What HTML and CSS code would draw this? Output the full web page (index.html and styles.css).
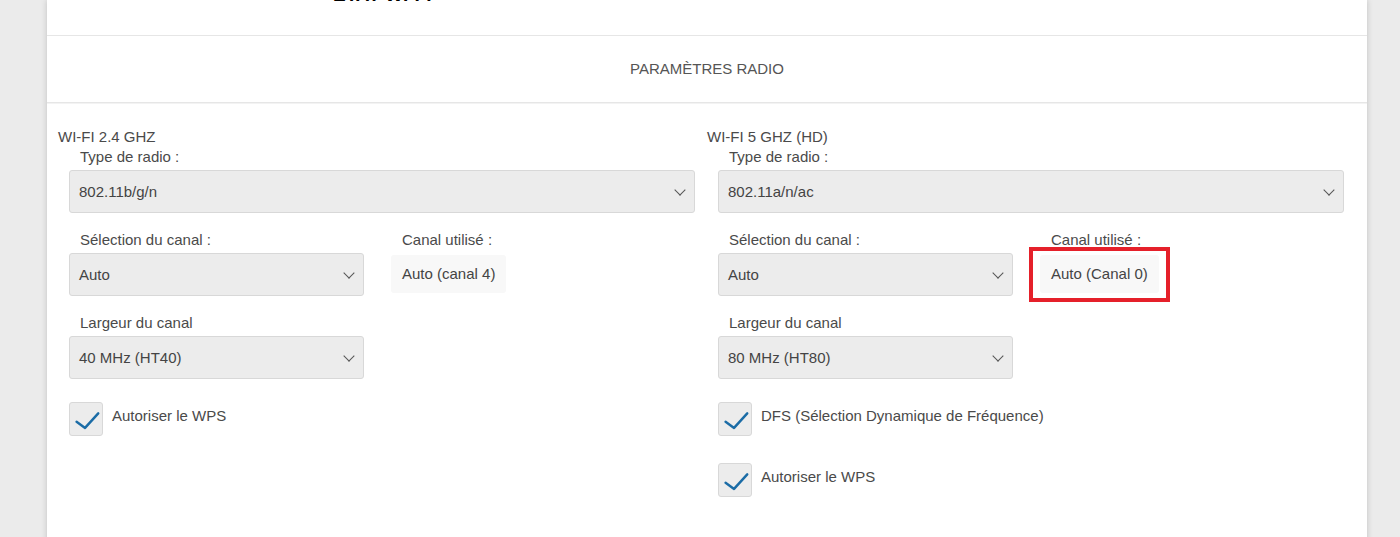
FILE: index.html
```html
<!DOCTYPE html>
<html lang="fr">
<head>
  <meta charset="UTF-8">
  <title>Paramètres radio</title>
  <link rel="stylesheet" href="styles.css">
</head>
<body>
  <div class="page">
    <!-- fin du bloc précédent -->
    <div class="prev-block">
      <h2 class="prev-title">ÉTAT WI-FI</h2>
    </div>

    <section class="panel">
      <div class="panel-head">PARAMÈTRES RADIO</div>

      <div class="panel-body">
        <!-- Wi-Fi 2.4 GHz -->
        <div class="band">
          <h3>WI-FI 2.4 GHZ</h3>
          <div class="band-fields">
            <div class="field">
              <label>Type de radio :</label>
              <div class="select">802.11b/g/n</div>
            </div>

            <div class="field-row">
              <div class="field small">
                <label>Sélection du canal :</label>
                <div class="select">Auto</div>
              </div>
              <div class="field">
                <label>Canal utilisé :</label>
                <div class="readout">Auto (canal 4)</div>
              </div>
            </div>

            <div class="field small">
              <label>Largeur du canal</label>
              <div class="select">40 MHz (HT40)</div>
            </div>

            <div class="check">
              <span class="box"><svg viewBox="0 0 34 34"><path d="M7 20 L16 26.5 L30 11"/></svg></span>
              <span>Autoriser le WPS</span>
            </div>
          </div>
        </div>

        <!-- Wi-Fi 5 GHz -->
        <div class="band">
          <h3>WI-FI 5 GHZ (HD)</h3>
          <div class="band-fields">
            <div class="field">
              <label>Type de radio :</label>
              <div class="select">802.11a/n/ac</div>
            </div>

            <div class="field-row">
              <div class="field small">
                <label>Sélection du canal :</label>
                <div class="select">Auto</div>
              </div>
              <div class="field">
                <label>Canal utilisé :</label>
                <div class="readout marked">Auto (Canal 0)</div>
              </div>
            </div>

            <div class="field small">
              <label>Largeur du canal</label>
              <div class="select">80 MHz (HT80)</div>
            </div>

            <div class="check">
              <span class="box"><svg viewBox="0 0 34 34"><path d="M7 20 L16 26.5 L30 11"/></svg></span>
              <span>DFS (Sélection Dynamique de Fréquence)</span>
            </div>

            <div class="check">
              <span class="box"><svg viewBox="0 0 34 34"><path d="M7 20 L16 26.5 L30 11"/></svg></span>
              <span>Autoriser le WPS</span>
            </div>
          </div>
        </div>
      </div>
    </section>
  </div>
</body>
</html>
```

FILE: styles.css
```css
* {
  margin: 0;
  padding: 0;
  box-sizing: border-box;
}
body {
  font-family: 'Liberation Sans', Arial, sans-serif;
  font-size: 15px;
  background-color: #ebebeb;
  color: #4a4a4a;
  overflow: hidden;
}

/* carte principale */
.page {
  width: 1320px;
  margin-left: 47px;
  min-height: 600px;
  background: #fff;
  box-shadow: 0 0 6px rgba(0,0,0,0.18);
}

.prev-block {
  display: flow-root;
  height: 36px;
  border-bottom: 1px solid #e6e6e6;
}
.prev-title {
  margin-top: -16px;
  padding-left: 286px;
  font-size: 19px;
  line-height: 22px;
  font-weight: 700;
  color: #000;
}

/* en-tête du panneau */
.panel-head {
  height: 67px;
  padding-bottom: 2px;
  display: flex;
  align-items: center;
  justify-content: center;
  text-transform: uppercase;
  color: #555;
  border-bottom: 1px solid #e6e6e6;
  box-shadow: 0 1px 0 #f3f3f3;
}

.panel-body {
  display: grid;
  grid-template-columns: 649px 649px;
  padding: 0 11px 40px;
}

.band h3 {
  font-size: 15px;
  font-weight: 400;
  line-height: 20px;
  margin-top: 24px;
  color: #4a4a4a;
}
.band-fields {
  padding: 0 12px 0 11px;
}

/* champs */
.field label {
  display: block;
  padding-left: 11px;
  line-height: 20px;
  margin-bottom: 3px;
  color: #4a4a4a;
}
.field + .field-row,
.field-row + .field {
  margin-top: 17px;
}
.field.small {
  width: 295px;
}
.field-row {
  display: flex;
  gap: 27px;
}

.select {
  position: relative;
  height: 43px;
  line-height: 41px;
  padding-left: 9px;
  background: #ececec;
  border: 1px solid #d8d8d8;
  border-radius: 3px;
  color: #444;
}
.select::after {
  content: '';
  position: absolute;
  right: 10px;
  top: 15px;
  width: 7px;
  height: 7px;
  border-right: 1px solid #555;
  border-bottom: 1px solid #555;
  transform: rotate(45deg);
}

.readout {
  position: relative;
  display: inline-block;
  margin-top: 2px;
  height: 38px;
  line-height: 38px;
  padding: 0 11px;
  background: #f8f8f8;
  border-radius: 3px;
  color: #444;
}
/* encadré rouge de mise en évidence */
.readout.marked::after {
  content: '';
  position: absolute;
  top: -8px;
  bottom: -9px;
  left: -11px;
  right: -11px;
  border: 4px solid #e5202a;
}

/* cases à cocher */
.check {
  display: flex;
  align-items: flex-start;
  gap: 9px;
  margin-top: 23px;
}
.check + .check {
  margin-top: 27px;
}
.check .box {
  width: 34px;
  height: 34px;
  flex: none;
  background: #ececec;
  border: 1px solid #d8d8d8;
  border-radius: 3px;
}
.check .box svg {
  display: block;
  width: 32px;
  height: 32px;
}
.check .box path {
  fill: none;
  stroke: #1b6ca6;
  stroke-width: 2.6;
  stroke-linecap: round;
  stroke-linejoin: round;
}
.check span:last-child {
  padding-top: 4px;
  line-height: 20px;
}
```
